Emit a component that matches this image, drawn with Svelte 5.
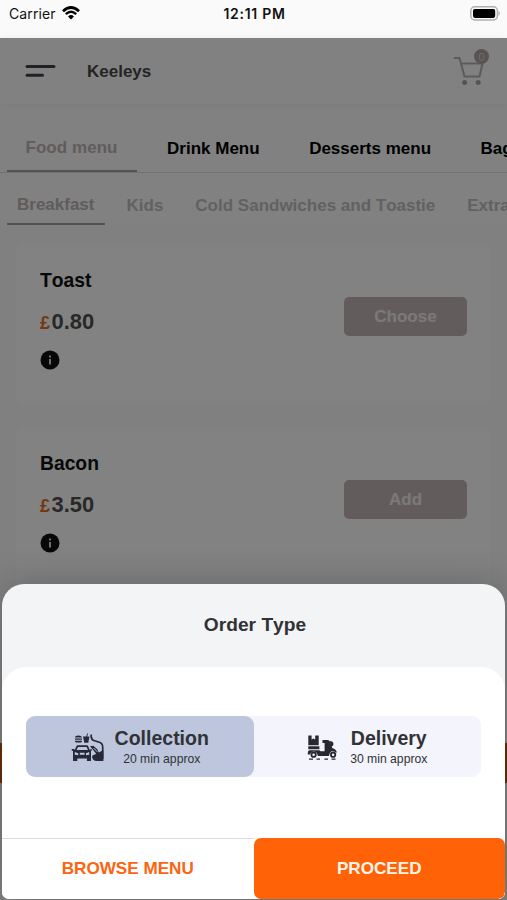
<script>
  const menus = ['Food menu', 'Drink Menu', 'Desserts menu', 'Bagels'];
  const categories = ['Breakfast', 'Kids', 'Cold Sandwiches and Toastie', 'Extras'];
  const items = [
    { name: 'Toast', price: '0.80', action: 'Choose' },
    { name: 'Bacon', price: '3.50', action: 'Add' }
  ];

  let menu = $state('Food menu');
  let category = $state('Breakfast');
  let orderType = $state('collection');
</script>

<div class="screen">
  <div class="status">
    <div class="carrier">
      <span>Carrier</span>
      <svg width="18" height="14" viewBox="0 0 18 14">
        <path d="M1 5.2Q9-2.2 17 5.2" fill="none" stroke="#000" stroke-width="2.7" />
        <path d="M3.8 8.1Q9 3.3 14.2 8.1" fill="none" stroke="#000" stroke-width="2.4" />
        <path d="M6 10.4Q9 7.8 12 10.4L9 13.6Z" fill="#000" />
      </svg>
    </div>
    <span class="time">12:11 PM</span>
    <svg class="battery" width="31" height="15" viewBox="0 0 31 15">
      <rect x=".8" y=".8" width="26.6" height="13.2" rx="4" fill="#fafafa" stroke="#b0b0ae" stroke-width="1.5" />
      <rect x="3" y="2.9" width="22.2" height="9" rx="1.8" />
      <path d="M28.6 4.8Q31 7.4 28.6 10Z" fill="#a5a5a5" />
    </svg>
  </div>

  <div class="app">
    <header>
      <svg class="burger" width="31" height="14" viewBox="0 0 31 14">
        <path d="M2 2.5H29M2 11.2H17.5" stroke="#40404e" stroke-width="3" stroke-linecap="round" />
      </svg>
      <h1>Keeleys</h1>
      <div class="cart">
        <svg width="32" height="30" viewBox="0 0 32 30">
          <path d="M1.5 2H6.5L11.5 20.5H26.5L29.5 7.5H8.5" fill="none" stroke="#b9b1af" stroke-width="2.1" stroke-linejoin="round" stroke-linecap="round" />
          <circle cx="11.6" cy="26.4" r="2.5" fill="#aaa3a1" />
          <circle cx="25.2" cy="26.4" r="2.5" fill="#aaa3a1" />
        </svg>
        <span class="badge">0</span>
      </div>
    </header>

    <nav class="menus">
      {#each menus as m}
        <button class:active={m === menu} onclick={() => (menu = m)}>{m}</button>
      {/each}
    </nav>

    <nav class="categories">
      {#each categories as c}
        <button class:active={c === category} onclick={() => (category = c)}>{c}</button>
      {/each}
    </nav>

    <div class="items">
      {#each items as item}
        <div class="card">
          <div>
            <h2>{item.name}</h2>
            <p class="price"><span>£</span>{item.price}</p>
            <svg class="info" width="20" height="20" viewBox="0 0 20 20">
              <circle cx="10" cy="10" r="9.5" fill="#101010" />
              <path d="M9 9H11V14.5H9ZM9 5.5H11V7.5H9Z" fill="#ddd" />
            </svg>
          </div>
          <button>{item.action}</button>
        </div>
      {/each}
    </div>

    <div class="basket-bar"></div>
  </div>

  <div class="overlay"></div>

  <div class="sheet">
    <div class="title">Order Type</div>
    <div class="body">
      <div class="types">
        <button class:selected={orderType === 'collection'} onclick={() => (orderType = 'collection')}>
          <svg width="34" height="30" viewBox="0 0 34 30" fill="#25293a">
            <!-- burger and drink -->
            <path d="M4 4.4Q4 2.4 7.3 2.4T11 4.4ZM4 5.4H11V6.7H4ZM4 7.8H11V8.6Q11 9.4 9.8 9.4H5.2Q4 9.4 4 8.6Z" />
            <path d="M12 3.5H18.4L17.3 9.8H13.3ZM15.2 3.5L16.3.2L17 .5L16.2 3.5Z" />
            <!-- car -->
            <path d="M4.6 17.2L6.4 13.2H16.2L18 17.2" fill="none" stroke="#25293a" stroke-width="1.7" stroke-linejoin="round" />
            <path fill-rule="evenodd" d="M.7 16H3.2L4 17H19L19.8 16H20.7V17.5L20 18V28H15.9V25.6H6.3V28H2V18L.7 17.5ZM3.8 19V21.7L7.2 22.2V20.2ZM18.2 19L15 20.2V22.2L18.2 21.7ZM8.8 19.8V21.8H13.6V19.8Z" />
            <!-- arm and hand -->
            <path d="M20.2 1.4V3.6Q20.3 6.8 23.7 7.7L28.3 9.2Q31.7 10.3 31.7 14V26" fill="none" stroke="#25293a" stroke-width="1.7" />
            <path d="M19 13.2L22.3 12.7L26.3 16.3L27.8 19.5L32.4 17V28H24.8Q21.5 27 21 24.2Q20.8 22.3 23.2 21.8L25.2 20.8L22.3 17.3Z" />
            <path d="M22.6 15L26.3 18.8" stroke="#bdc6dd" stroke-width="1" />
          </svg>
          <span class="label"><b>Collection</b><small>20 min approx</small></span>
        </button>
        <button class:selected={orderType === 'delivery'} onclick={() => (orderType = 'delivery')}>
          <svg width="31" height="26" viewBox="0 0 31 26" fill="#272832">
            <!-- boxes on the rack -->
            <path d="M1.3.5H4.6V4.4L6.4 3.4L8.2 4.4V.5H11.7V10.2H1.3Z" />
            <path d="M1.3 11.3H12.4V14.3H1.3Z" />
            <!-- scooter -->
            <path d="M2.2 15.3H12.5L13.5 16.2H17.6V8H15.5V5H20.8Q22.4 5 23 7L25.4 13.3Q29.2 14.1 29.9 17.7L26 16Q22.8 16 22 20.9H10.9Q9.8 16.4 6.4 16.5Q3.5 16.8 2.9 19.5H.8V18Q.8 16 2.2 15.3Z" />
            <path d="M22.6 6Q26.4 6.2 26.4 8.8T24 11.4Z" />
            <circle cx="6.6" cy="19.7" r="2.2" fill="none" stroke="#272832" stroke-width="1.8" />
            <circle cx="26.1" cy="19.7" r="2.2" fill="none" stroke="#272832" stroke-width="1.8" />
            <path d="M2 24.2H6M9.5 24.2H13M17.4 24.2H21M24.5 24.2H28.5" stroke="#272832" stroke-width="1.2" />
          </svg>
          <span class="label"><b>Delivery</b><small>30 min approx</small></span>
        </button>
      </div>
    </div>
    <div class="actions">
      <button class="browse">BROWSE MENU</button>
      <button class="proceed">PROCEED</button>
    </div>
  </div>
</div>

<style>
  :global(body) {
    margin: 0;
  }
  .screen {
    position: relative;
    display: flex;
    flex-direction: column;
    width: 507px;
    height: 900px;
    overflow: hidden;
    font-family: "Liberation Sans", Arial, sans-serif;
    background: #fff;
  }
  button {
    border: 0;
    padding: 0;
    background: none;
    font: inherit;
    font-weight: bold;
    font-kerning: none;
    white-space: nowrap;
  }
  h1, h2, p {
    margin: 0;
  }
  svg {
    display: block;
  }

  .status {
    display: grid;
    grid-template-columns: 1fr auto 1fr;
    height: 38px;
    box-sizing: border-box;
    padding: 5px 6px 0 9px;
    background: #fafafa;
    font-family: Inter, sans-serif;
    font-size: 14px;
    line-height: 18px;
    color: #111;
  }
  .carrier {
    display: flex;
    gap: 6px;
    letter-spacing: .1px;
  }
  .carrier svg {
    margin-top: 1px;
  }
  .time {
    font-weight: 600;
    letter-spacing: .7px;
    margin-right: 1px;
  }
  .battery {
    justify-self: end;
    margin-top: 1px;
  }

  .app {
    flex: 1;
    display: flex;
    flex-direction: column;
    min-height: 0;
    background: #fefefe;
  }
  header {
    display: flex;
    align-items: center;
    height: 66px;
    flex: none;
    padding: 0 18px 0 25px;
    box-shadow: 0 1px 9px rgba(0, 0, 0, .06);
  }
  header h1 {
    margin: 2px 0 0 31px;
    font-size: 17px;
    font-kerning: none;
    color: #484848;
  }
  .cart {
    position: relative;
    margin: -9px 0 0 auto;
    width: 36px;
    height: 36px;
    box-sizing: border-box;
    padding-top: 7px;
  }
  .badge {
    position: absolute;
    top: 0;
    right: 0;
    width: 15px;
    height: 15px;
    border-radius: 50%;
    background: #aea3a1;
    color: #dcd0ce;
    font-size: 11px;
    line-height: 16px;
    text-align: center;
  }

  .menus, .categories {
    display: flex;
    flex: none;
    box-sizing: border-box;
    padding-left: 7px;
    overflow: hidden;
    font-size: 17px;
  }
  .menus {
    height: 58px;
    margin-top: 11px;
    border-bottom: 1px solid #e2e2e2;
  }
  .menus button {
    margin-right: 12px;
    padding: 12px 19px 0 18.5px;
    border-bottom: 2px solid transparent;
    color: #000;
  }
  .menus button.active {
    padding-top: 10px;
    border-color: #a5a09e;
    color: #bcb4b2;
    letter-spacing: .05px;
  }
  .categories {
    height: 52px;
  }
  .categories button {
    padding: 16px 10px 0;
    margin-right: 12px;
    border-bottom: 2px solid transparent;
    color: #bfbfbf;
  }
  .categories button.active {
    padding-top: 14px;
    border-color: #a5a09e;
    color: #bcb4b2;
  }

  .items {
    flex: 1;
    display: flex;
    flex-direction: column;
    gap: 22px;
    padding: 19px 16px 0;
    background: #fcfcfc;
  }
  .card {
    display: flex;
    justify-content: space-between;
    align-items: flex-start;
    height: 161px;
    flex: none;
    box-sizing: border-box;
    padding: 25px 24px 0;
    border-radius: 8px;
    background: #fff;
  }
  .card h2 {
    font-size: 19.3px;
    line-height: 24px;
    font-kerning: none;
    color: #111;
  }
  .price {
    margin: 16px 0 13.5px;
    font-size: 21.9px;
    line-height: 26px;
    font-weight: bold;
    color: #505050;
  }
  .price span {
    display: inline-block;
    width: 11.5px;
    font-size: 18px;
    color: #dd7025;
  }
  .card button {
    width: 123px;
    height: 39px;
    margin-top: 28px;
    border-radius: 5px;
    background: #c0b7b5;
    font-size: 17px;
    color: #f4eeee;
  }
  .basket-bar {
    flex: none;
    height: 40px;
    margin-bottom: 117px;
    background: #cb5a10;
  }

  .overlay {
    position: absolute;
    inset: 38px 0 0;
    background: rgba(0, 0, 0, .49);
  }

  .sheet {
    position: absolute;
    left: 2px;
    right: 2px;
    top: 584px;
    bottom: 1px;
    display: flex;
    flex-direction: column;
    overflow: hidden;
    border-radius: 22px 22px 7px 7px;
    background: #f2f4f5;
    box-shadow: 0 0 36px rgba(0, 0, 0, .22);
  }
  .title {
    height: 83px;
    padding-left: 3px;
    line-height: 82px;
    text-align: center;
    font-size: 19.2px;
    font-weight: bold;
    font-kerning: none;
    color: #303236;
  }
  .body {
    flex: 1;
    padding: 49px 24px 0;
    border-radius: 24px 24px 0 0;
    background: #fff;
  }
  .types {
    display: grid;
    grid-template-columns: 1fr 1fr;
    height: 61px;
    border-radius: 9px;
    background: #f3f4fc;
  }
  .types button {
    display: flex;
    justify-content: center;
    align-items: center;
    gap: 10px;
    border-radius: 9px;
    color: #303236;
  }
  .types button:last-child {
    gap: 12px;
  }
  .types button.selected {
    background: #bdc6dd;
  }
  .types svg {
    margin-top: 2px;
  }
  .label {
    display: flex;
    flex-direction: column;
    align-items: center;
    padding-top: 2px;
  }
  .label b {
    font-size: 19.5px;
    line-height: 23px;
  }
  .label small {
    font-size: 12.2px;
    line-height: 19px;
    font-weight: normal;
  }
  .actions {
    display: grid;
    grid-template-columns: 1fr 1fr;
    height: 61px;
    background: #fff;
    font-size: 17.1px;
  }
  .browse {
    border-top: 1px solid #dcdcde;
    color: #fc6410;
  }
  .proceed {
    border-radius: 7px;
    background: #ff6207;
    color: #fff4e8;
  }
</style>
